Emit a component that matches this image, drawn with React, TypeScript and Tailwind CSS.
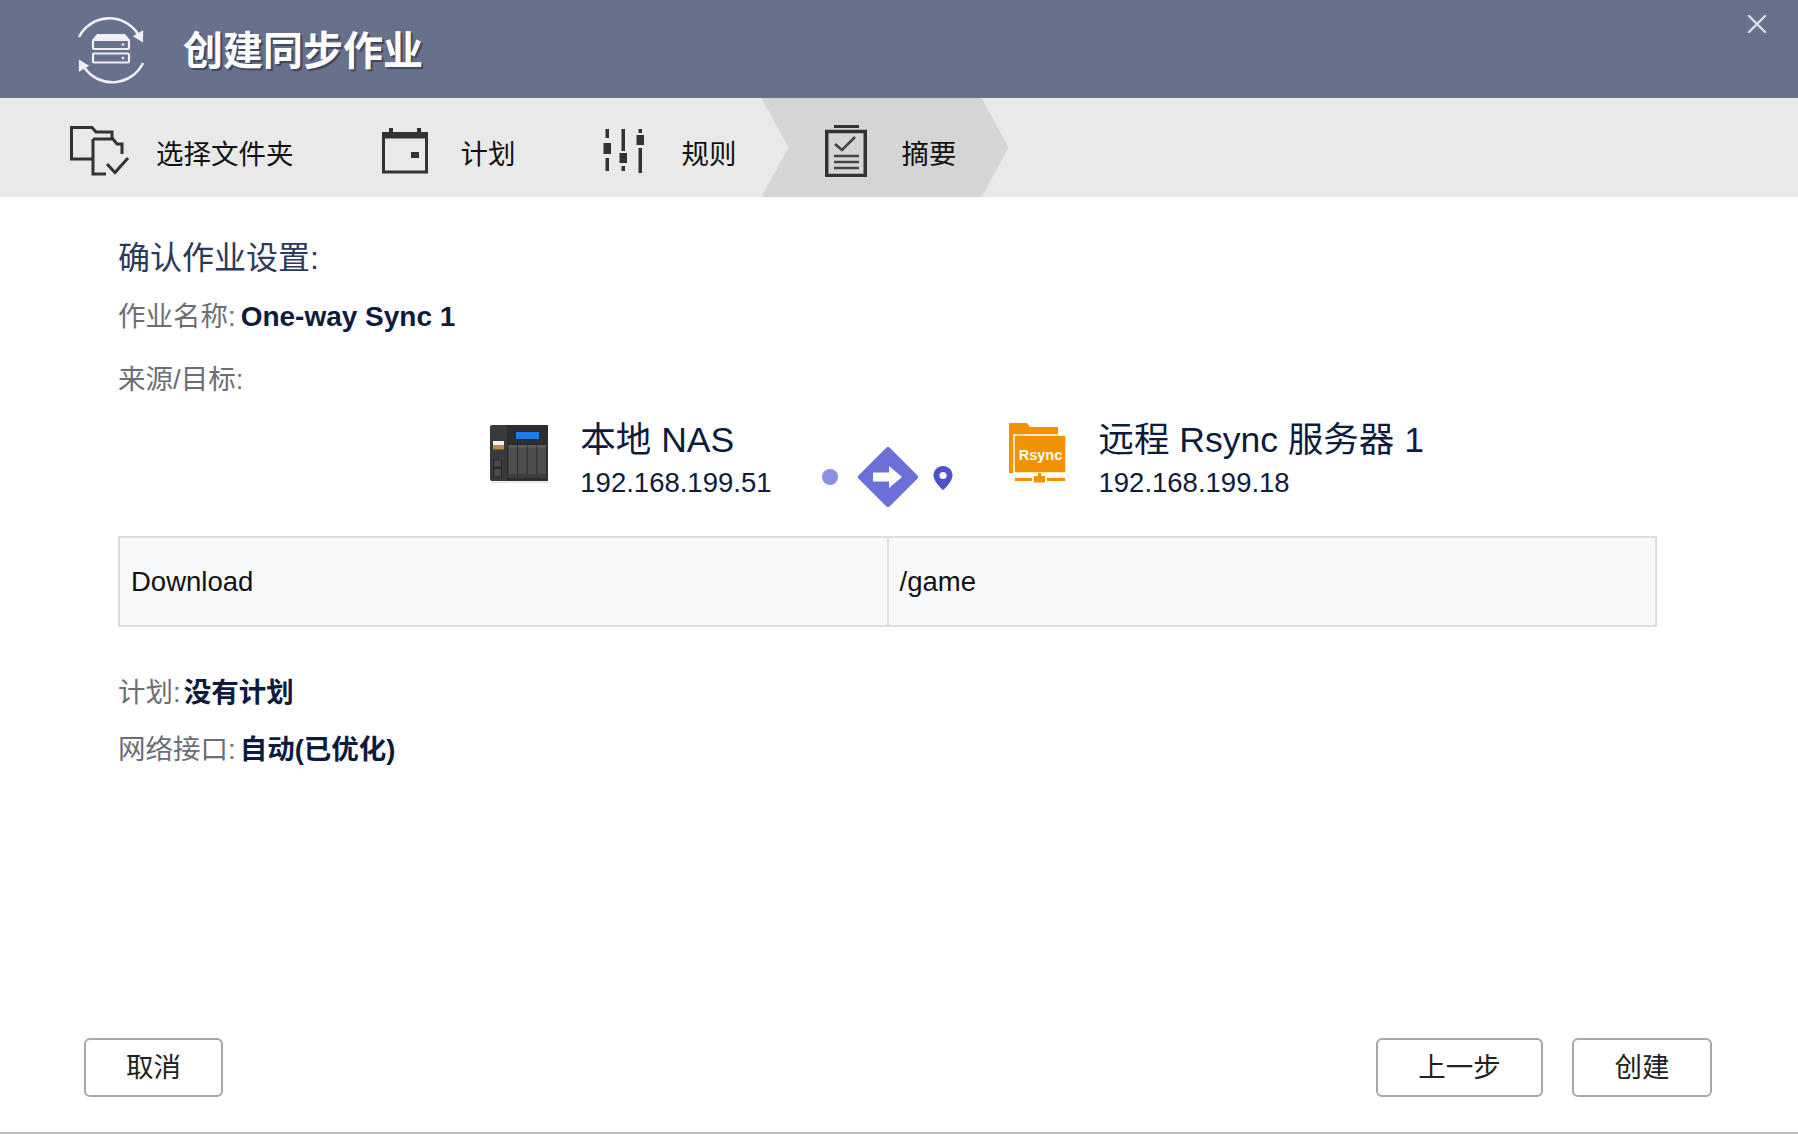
import React from "react";

const Logo = () => (
  <svg width="72" height="72" viewBox="0 0 72 72" fill="none">
    <path d="M4 22 A34 34 0 0 1 63 19" stroke="#eef0f5" strokeWidth="2.6" />
    <polygon points="57.8,21.3 68.2,15.3 68,27.5" fill="#eef0f5" />
    <path d="M68 48 A34 34 0 0 1 9 52" stroke="#eef0f5" strokeWidth="2.6" />
    <polygon points="3.8,56.7 14.2,50.7 4,44.5" fill="#eef0f5" />
    <path d="M22 19 H50 L55 25 H17 Z" fill="#eef0f5" />
    <rect x="18" y="25" width="36" height="9" rx="1" stroke="#eef0f5" strokeWidth="2.2" />
    <circle cx="48" cy="29.5" r="1.3" fill="#eef0f5" />
    <rect x="18" y="38.5" width="36" height="9" rx="1" stroke="#eef0f5" strokeWidth="2.2" />
    <circle cx="48" cy="43" r="1.3" fill="#eef0f5" />
  </svg>
);

const CloseIcon = () => (
  <svg width="20" height="20" viewBox="0 0 20 20" fill="none">
    <path d="M2 2 L18 18 M18 2 L2 18" stroke="#dcdfe6" strokeWidth="2.4" strokeLinecap="round" />
  </svg>
);

const FolderIcon = () => (
  <svg width="60" height="50" viewBox="0 0 60 50" fill="none" stroke="#333" strokeWidth="3">
    <path d="M23 33 H1.5 V1.5 H22 L26 6 H42 V13" />
    <path d="M23 13 V48 H36" />
    <path d="M23 13 H43 L47 18 H52 V28" />
    <path d="M37 38 L45 46.5 L58 32" />
  </svg>
);

const CalendarIcon = () => (
  <svg width="46" height="46" viewBox="0 0 46 46" fill="none">
    <rect x="1.5" y="5.5" width="43" height="38.5" stroke="#333" strokeWidth="3" />
    <rect x="1.5" y="5.5" width="43" height="5" fill="#333" />
    <rect x="7" y="0" width="4" height="8" fill="#333" />
    <rect x="35" y="0" width="4" height="8" fill="#333" />
    <rect x="29" y="24" width="8" height="6" fill="#333" />
  </svg>
);

const RulesIcon = () => (
  <svg width="44" height="46" viewBox="0 0 44 46" fill="#333">
    <rect x="2.5" y="1" width="3.5" height="9" />
    <rect x="0.5" y="15" width="7.5" height="11" />
    <rect x="2.5" y="30" width="3.5" height="13" />
    <rect x="18.5" y="1" width="3.5" height="22" />
    <rect x="16.5" y="25" width="7.5" height="10" />
    <rect x="18.5" y="38" width="3.5" height="5" />
    <rect x="35.5" y="1" width="3.5" height="4" />
    <rect x="33.5" y="7" width="7.5" height="10" />
    <rect x="35.5" y="20" width="3.5" height="25" />
  </svg>
);

const ClipboardIcon = () => (
  <svg width="42" height="52" viewBox="0 0 42 52" fill="none">
    <rect x="1.75" y="6.5" width="38.5" height="44" stroke="#333" strokeWidth="3.5" />
    <rect x="9" y="0" width="25" height="3" fill="#333" />
    <path d="M10 19 L17 25 L30 12" stroke="#444" strokeWidth="2.6" />
    <path d="M9 31 H34 M9 37 H34 M9 43 H34" stroke="#444" strokeWidth="2.6" />
  </svg>
);

const NasIcon = () => (
  <svg width="59" height="58" viewBox="0 0 59 58">
    <rect x="0" y="0" width="58" height="56" rx="2" fill="#3a3a3d" />
    <rect x="17" y="0" width="41" height="56" fill="#2d2d30" />
    <rect x="26" y="7" width="23" height="7" fill="#1f7cf0" />
    {[0, 1, 2, 3].map((i) => (
      <g key={i}>
        <rect x={18.5 + i * 9.6} y="20" width="8.6" height="33" fill="#4f4f52" />
        <rect x={18.5 + i * 9.6} y="20" width="8.6" height="2.5" fill="#5e5e61" />
        <rect x={18.5 + i * 9.6} y="49" width="8.6" height="4" fill="#3e3e41" />
      </g>
    ))}
    <rect x="3" y="16" width="11" height="4" fill="#efefef" />
    <rect x="3" y="20" width="11" height="4.5" fill="#c38a3c" />
    <rect x="3.5" y="35" width="8" height="7" fill="#48484b" stroke="#222" strokeWidth="0.8" />
    <rect x="3.5" y="43.5" width="8" height="8.5" fill="#48484b" stroke="#222" strokeWidth="0.8" />
    <rect x="1" y="56.5" width="57" height="1.5" fill="#e2e2e2" />
  </svg>
);

const RsyncIcon = () => (
  <svg width="57" height="63" viewBox="0 0 57 63">
    <path d="M0 1 Q0 0 1 0 H18 L21 4 H49 V50 H0 Z" fill="#f39200" />
    <rect x="5" y="12" width="52" height="38" fill="#f39200" stroke="#ffffff" strokeWidth="1.5" />
    <text
      x="31.5"
      y="37"
      textAnchor="middle"
      fill="#ffffff"
      fontSize="14.5"
      fontWeight="700"
      fontFamily="Liberation Sans, Arial, sans-serif"
    >
      Rsync
    </text>
    <rect x="29" y="50" width="3" height="4" fill="#f39200" />
    <rect x="25" y="53" width="11" height="6.5" fill="#f39200" />
    <rect x="6" y="55" width="17" height="3" fill="#f39200" />
    <rect x="38" y="55" width="18" height="3" fill="#f39200" />
  </svg>
);

const Diamond = () => (
  <svg width="62" height="62" viewBox="0 0 62 62">
    <path
      d="M31 3.5 L58.5 31 L31 58.5 L3.5 31 Z"
      fill="#6b6fd8"
      stroke="#6b6fd8"
      strokeWidth="5"
      strokeLinejoin="round"
    />
    <path d="M16 26.5 H32 V20 L45 31 L32 42 V35.5 H16 Z" fill="#ffffff" />
  </svg>
);

const Pin = () => (
  <svg width="22" height="26" viewBox="0 0 22 26">
    <path
      d="M11 1 C5.5 1 1.5 5.3 1.5 10.5 C1.5 17 11 25 11 25 C11 25 20.5 17 20.5 10.5 C20.5 5.3 16.5 1 11 1 Z"
      fill="#4d52c8"
    />
    <circle cx="11" cy="10.5" r="3.6" fill="#ffffff" />
  </svg>
);

export default function App() {
  return (
    <div className="w-[1798px] h-[1134px] bg-white flex flex-col overflow-hidden font-['Liberation_Sans','Noto_Sans_CJK_SC',sans-serif]">
      <header className="h-[98px] shrink-0 bg-[#67718b] flex items-start">
        <div className="flex items-center h-full pl-[75px] pt-[3px]">
          <Logo />
          <span className="ml-[36px] text-[40px] font-bold text-white leading-none [text-shadow:2px_2px_1px_rgba(30,35,55,0.55)]">
            创建同步作业
          </span>
        </div>
        <button className="ml-auto mt-[14px] mr-[31px]">
          <CloseIcon />
        </button>
      </header>

      <nav className="h-[99px] shrink-0 bg-[#e9e9e9] flex items-stretch pl-[70px] text-[27.5px] text-[#111]">
        <div className="flex items-center pt-[7px]">
          <FolderIcon />
          <span className="ml-[26px] pt-[7px]">选择文件夹</span>
        </div>
        <div className="flex items-center pt-[7px] ml-[88px]">
          <CalendarIcon />
          <span className="ml-[33px] pt-[7px]">计划</span>
        </div>
        <div className="flex items-center pt-[7px] ml-[87px]">
          <RulesIcon />
          <span className="ml-[35px] pt-[7px]">规则</span>
        </div>
        <div className="flex items-center pt-[7px] ml-[25px] w-[247px] pl-[63px] bg-[#d5d5d5] [clip-path:polygon(0_0,220px_0,247px_50%,220px_100%,0_100%,27px_50%)]">
          <ClipboardIcon />
          <span className="ml-[35px] pt-[7px]">摘要</span>
        </div>
      </nav>

      <main className="flex-1 pl-[118px] pr-[141px] text-[27.5px]">
        <h2 className="mt-[41px] text-[32px] leading-[40px] text-[#2b3a5a]">确认作业设置:</h2>
        <p className="mt-[21px] leading-[36px] text-[#6b6e74]">
          作业名称:<span className="ml-[5px] font-bold text-[28px] text-[#0e1b3d]">One-way Sync 1</span>
        </p>
        <p className="mt-[27px] leading-[36px] text-[#6b6e74]">来源/目标:</p>

        <div className="mt-[21px] grid grid-cols-[1fr_132px_1fr] items-start">
          <div className="flex justify-end items-start pr-[50px]">
            <div className="mt-[6px]">
              <NasIcon />
            </div>
            <div className="ml-[31px] text-[#0e1b3d]">
              <div className="text-[35.5px] leading-[42px]">本地 NAS</div>
              <div className="mt-[5px] leading-[34px]">192.168.199.51</div>
            </div>
          </div>
          <div className="mt-[27px] h-[62px] flex items-center">
            <div className="w-[16px] h-[16px] rounded-full bg-[#8c8fe2]" />
            <div className="ml-[19px]">
              <Diamond />
            </div>
            <div className="ml-[13px] mt-[1px]">
              <Pin />
            </div>
          </div>
          <div className="flex items-start pl-[55px]">
            <div className="mt-[4px]">
              <RsyncIcon />
            </div>
            <div className="ml-[33px] text-[#0e1b3d]">
              <div className="text-[35.5px] leading-[42px]">远程 Rsync 服务器 1</div>
              <div className="mt-[5px] leading-[34px]">192.168.199.18</div>
            </div>
          </div>
        </div>

        <div className="mt-[28px] h-[91px] flex border-2 border-[#dedede] bg-[#f7f8fa] text-[#111]">
          <div className="flex-1 flex items-center pl-[11px] border-r-2 border-[#dedede]">Download</div>
          <div className="flex-1 flex items-center pl-[11px]">/game</div>
        </div>

        <p className="mt-[48px] leading-[36px] text-[#6b6e74]">
          计划:<span className="ml-[3px] font-bold text-[#0e1b3d]">没有计划</span>
        </p>
        <p className="mt-[21px] leading-[36px] text-[#6b6e74]">
          网络接口:<span className="ml-[4px] font-bold text-[#0e1b3d]">自动(已优化)</span>
        </p>
      </main>

      <footer className="shrink-0 flex items-start pl-[84px] pr-[86px] pb-[35px] border-b-2 border-[#bdbdbd] text-[27.5px] text-[#222]">
        <button className="w-[139px] h-[59px] border-2 border-[#a8a8a8] rounded-[6px] bg-white">取消</button>
        <button className="ml-auto w-[167px] h-[59px] border-2 border-[#a8a8a8] rounded-[6px] bg-white">上一步</button>
        <button className="ml-[29px] w-[140px] h-[59px] border-2 border-[#a8a8a8] rounded-[6px] bg-white">创建</button>
      </footer>
    </div>
  );
}
